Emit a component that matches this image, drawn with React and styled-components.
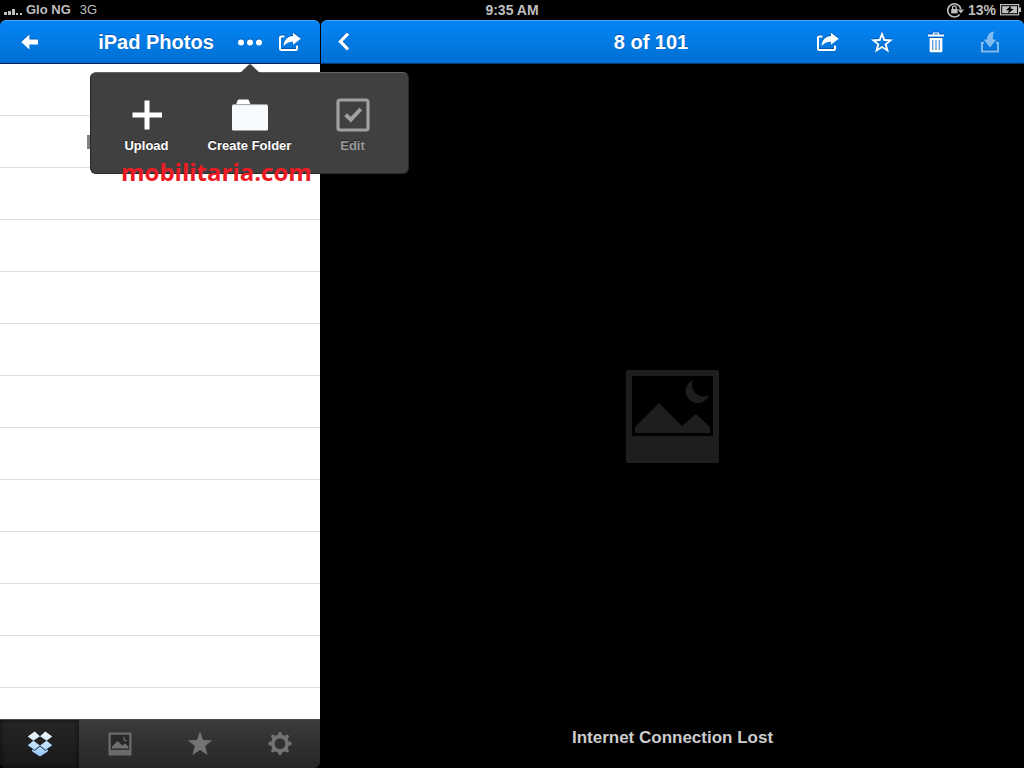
import React from 'react';
import styled, { createGlobalStyle, css } from 'styled-components';

const GlobalStyle = createGlobalStyle`
  * {
    box-sizing: border-box;
  }

  body {
    margin: 0;
    background: #000;
    font-family: "Liberation Sans", Helvetica, Arial, sans-serif;
  }

  button {
    padding: 0;
    border: 0;
    background: none;
    color: inherit;
    font: inherit;
    cursor: pointer;
  }

  svg {
    display: block;
  }
`;

const Screen = styled.div`
  display: flex;
  flex-direction: column;
  height: 100vh;
  overflow: hidden;
`;

const StatusBar = styled.div`
  display: grid;
  grid-template-columns: 1fr auto 1fr;
  align-items: center;
  height: 20px;
  padding: 0 3px;
  color: #bfbfbf;
  font-size: 14px;
  font-weight: bold;
  line-height: 20px;
`;

const StatusGroup = styled.div`
  display: flex;
  align-items: center;
  gap: 4px;
  justify-content: ${props => (props.$end ? 'flex-end' : 'flex-start')};
`;

const Carrier = styled.span`
  font-size: 13px;
`;

const Network = styled.span`
  margin-left: 5px;
  font-size: 13px;
  font-weight: normal;
`;

const Panes = styled.div`
  display: flex;
  flex: 1;
  gap: 1px;
  min-height: 0;
`;

const Sidebar = styled.aside`
  position: relative;
  display: flex;
  flex-direction: column;
  flex: 0 0 320px;
`;

const Viewer = styled.main`
  display: flex;
  flex-direction: column;
  flex: 1;
  min-width: 0;
`;

const NavBar = styled.header`
  display: flex;
  flex-shrink: 0;
  height: 44px;
  padding-right: ${props => (props.$wide ? '7px' : '10px')};
  border-top: 1px solid #4aa5f5;
  border-bottom: 1px solid ${props => (props.$wide ? '#04396f' : '#001c5c')};
  border-radius: 6px 6px 0 0;
  background: linear-gradient(180deg, #0585f5 0%, #006fd2 100%);
  color: #fff;
`;

const NavButton = styled.button`
  display: flex;
  align-items: center;
  justify-content: center;
  width: ${props => props.$width}px;
  filter: drop-shadow(0 -1px 0 rgba(0, 40, 110, 0.4));

  &:disabled {
    opacity: 0.5;
    cursor: default;
  }
`;

const NavTitle = styled.h1`
  flex: 1;
  margin: 0;
  padding-left: ${props => props.$inset}px;
  font-size: 20px;
  font-weight: bold;
  line-height: 42px;
  text-align: center;
  text-shadow: 0 -1px 0 rgba(0, 40, 110, 0.5);
  white-space: nowrap;
`;

const FileList = styled.ul`
  flex: 1;
  min-height: 0;
  margin: 0;
  padding: 0;
  overflow: hidden;
  background: #fff;
  list-style: none;
`;

const FileRow = styled.li`
  display: flex;
  align-items: center;
  height: 52px;
  border-bottom: 1px solid #e0e0e0;
`;

const RowMark = styled.span`
  width: 6px;
  height: 14px;
  margin-left: 87px;
  background: #808080;
`;

const TabBar = styled.nav`
  display: grid;
  flex-shrink: 0;
  grid-template-columns: repeat(4, 1fr);
  height: 49px;
  border-top: 1px solid #4a4a4a;
  border-radius: 0 0 6px 6px;
  background: linear-gradient(180deg, #3b3b3b 0%, #262626 100%);
`;

const Tab = styled.button`
  display: flex;
  align-items: center;
  justify-content: center;

  ${props =>
    props.$active &&
    css`
      margin-right: 1px;
      padding-left: 1px;
      border-radius: 0 0 0 6px;
      background: linear-gradient(180deg, #262626 0%, #181818 100%);
      box-shadow: inset 0 0 5px #0c0c0c;
    `}
`;

const Popover = styled.div`
  position: absolute;
  z-index: 2;
  top: 52px;
  left: 90px;
  width: 319px;
  padding: 25px 4px 17px;
  border: 1px solid #2a2a2a;
  border-top-color: #666;
  border-radius: 6px;
  background: #404040;
`;

const PopoverArrow = styled.svg`
  position: absolute;
  bottom: 100%;
  left: 149px;
`;

const PopoverActions = styled.div`
  display: grid;
  grid-template-columns: repeat(3, 1fr);
`;

const Action = styled.button`
  display: flex;
  flex-direction: column;
  align-items: center;
  gap: 4px;
  color: #fff;
  font-size: 13px;
  font-weight: bold;
  line-height: 20px;
  text-shadow: 0 -1px 0 #222;
  white-space: nowrap;

  &:disabled {
    color: #999;
    cursor: default;
  }
`;

const Watermark = styled.div`
  position: absolute;
  z-index: 3;
  top: 135px;
  left: 121px;
  color: #ed1c24;
  font-family: "Open Sans", "Noto Sans", sans-serif;
  font-size: 24px;
  font-weight: bold;
  line-height: 34px;
`;

const Stage = styled.section`
  display: grid;
  flex: 1;
  grid-template-rows: 1fr auto 1fr;
  justify-items: center;
`;

const Message = styled.p`
  grid-row: 3;
  align-self: end;
  margin: 0;
  padding-bottom: 20px;
  color: #ccc;
  font-size: 17px;
  font-weight: bold;
  line-height: 20px;
`;

const Placeholder = styled.svg`
  grid-row: 2;
`;

function SignalIcon() {
  return (
    <svg width="19" height="12" viewBox="0 0 19 12" fill="#bfbfbf">
      <rect x="1" y="8" width="3" height="3" />
      <rect x="5" y="7" width="3" height="4" />
      <rect x="9" y="5" width="3" height="6" />
      <rect x="13" y="9" width="2" height="2" />
      <rect x="17" y="9" width="2" height="2" />
    </svg>
  );
}

function RotationLockIcon() {
  return (
    <svg width="17" height="16" viewBox="0 0 17 16">
      <path d="M12.6 12.4A6.6 6.6 0 1 1 13.8 7" fill="none" stroke="#bfbfbf" strokeWidth="1.6" />
      <path d="M10.8 7.5H17l-3.1 4z" fill="#bfbfbf" />
      <rect x="4.2" y="7" width="6.4" height="4.4" fill="#bfbfbf" />
      <path d="M5.6 7V5.6a1.8 1.8 0 0 1 3.6 0V7" fill="none" stroke="#bfbfbf" strokeWidth="1.3" />
    </svg>
  );
}

function BatteryIcon() {
  return (
    <svg width="21" height="12" viewBox="0 0 21 12">
      <rect x="0.6" y="0.6" width="18" height="10.2" fill="none" stroke="#bfbfbf" strokeWidth="1.2" />
      <rect x="2.2" y="2.2" width="14.8" height="7" fill="#bfbfbf" />
      <path d="M19 3.6h2v4.4H19z" fill="#bfbfbf" />
      <path d="M11 1.6L6 6.2l3 .2L7.8 9.8l6-4.7-3.2-.3z" fill="#000" />
    </svg>
  );
}

function BackArrowIcon() {
  return (
    <svg width="18" height="16" viewBox="0 0 18 16" fill="#fff">
      <path d="M0.2 8L8.4 0.4V5.6H17V10.4H8.4V15.6z" />
    </svg>
  );
}

function ChevronIcon() {
  return (
    <svg width="14" height="20" viewBox="0 0 14 20" fill="none" stroke="#fff" strokeWidth="3.2">
      <path d="M11 1.6L3.4 9.4l7.6 8" />
    </svg>
  );
}

function MoreIcon() {
  return (
    <svg width="26" height="8" viewBox="0 0 26 8" fill="#fff">
      <circle cx="4" cy="4.6" r="3" />
      <circle cx="13" cy="4.6" r="3" />
      <circle cx="22" cy="4.6" r="3" />
    </svg>
  );
}

function ShareIcon() {
  return (
    <svg width="22" height="20" viewBox="0 0 22 20">
      <path
        d="M5.4 4.6H2.2Q1 4.6 1 5.8V16.8Q1 18 2.2 18H16.8Q18 18 18 16.8V13.4"
        fill="none"
        stroke="#fff"
        strokeWidth="2"
      />
      <path d="M14 0.8L21.8 6.8L14 12.8V9.8C10.4 9.6 7.8 10.6 4.6 14C4.8 8 8.6 4.2 14 4z" fill="#fff" />
    </svg>
  );
}

function StarOutlineIcon() {
  return (
    <svg width="22" height="22" viewBox="0 0 22 22">
      <path
        fillRule="evenodd"
        d="M11 0.4L14 8L22 8.4L15.8 13.4L18 21.4L11 17L4 21.4L6.2 13.4L0 8.4L8 8zM11 5.6L9.4 10L4.8 10.2L8.4 13L7.2 17.4L11 14.8L14.8 17.4L13.6 13L17.2 10.2L12.6 10z"
        fill="#fff"
      />
    </svg>
  );
}

function TrashIcon() {
  return (
    <svg width="16" height="22" viewBox="0 0 16 22">
      <path
        fillRule="evenodd"
        d="M5 1.6H11V3.4H16V5.4H0V3.4H5zM6.2 2.6V3.4H9.8V2.6z"
        fill="#fff"
      />
      <path d="M1.6 7H14.4V20Q14.4 21.2 13.2 21.2H2.8Q1.6 21.2 1.6 20z" fill="#fff" />
      <path d="M4.7 9v10M8 9v10M11.3 9v10" stroke="#5a96d8" strokeWidth="1.3" />
    </svg>
  );
}

function DownloadIcon() {
  return (
    <svg width="20" height="22" viewBox="0 0 20 22">
      <path d="M4 11.8H2V20.4H18V11.8H16" fill="none" stroke="#fff" strokeWidth="2" />
      <path d="M14.6 0.2C12.8 3 12.7 5.4 13 8.4H16.4L10 16.4L3.6 8.4H7C7 4.2 9.4 1 14.6 0.2z" fill="#fff" />
    </svg>
  );
}

function PlusIcon() {
  return (
    <svg width="34" height="34" viewBox="0 0 34 34" fill="#fff">
      <path d="M14.5 2.5h5v12H32v5H19.5V31.5h-5v-12H2.500v-5h12z" />
    </svg>
  );
}

function FolderIcon() {
  return (
    <svg width="38" height="34" viewBox="0 0 38 34">
      <path d="M5 6.4L6.6 2.6Q7 1.6 8 1.6H16.6Q17.6 1.6 18 2.4L19.6 6.4z" fill="#fff" />
      <rect x="1" y="7" width="36" height="25.6" rx="1.4" fill="#f8fbfd" />
      <path d="M1.6 6.6h34.8" stroke="#aaa" strokeWidth="1" />
    </svg>
  );
}

function CheckBoxIcon() {
  return (
    <svg width="34" height="34" viewBox="0 0 34 34" fill="none" stroke="#a0a0a0">
      <rect x="2" y="2" width="30" height="30" rx="2" strokeWidth="3.2" />
      <path d="M9.6 16.6L14.8 21.6L24.8 11" strokeWidth="4" />
    </svg>
  );
}

function DropboxIcon() {
  return (
    <svg width="26" height="26" viewBox="0 0 26 26">
      <defs>
        <linearGradient id="box" x1="0" y1="0" x2="0" y2="26" gradientUnits="userSpaceOnUse">
          <stop offset="0" stopColor="#f6faff" />
          <stop offset="1" stopColor="#8cc8fb" />
        </linearGradient>
      </defs>
      <g fill="url(#box)">
        <path d="M7.6 0.6L13 5.2L6.4 9.8L0.8 5.4z" />
        <path d="M18.400 0.600L25.200 5.400L19.600 9.800L13 5.200z" />
        <path d="M6.4 9.8L13 14.4L7.6 19L0.8 14.2z" />
        <path d="M19.6 9.8L25.2 14.2L18.400 19L13 14.400z" />
        <path d="M13 15.6L18.200 19.800L20.800 18.200V20.400L13 25.600L5.200 20.400V18.200L7.800 19.800z" />
      </g>
    </svg>
  );
}

function PhotoIcon() {
  return (
    <svg width="24" height="24" viewBox="0 0 24 24">
      <path d="M0.5 0.5h23v23H0.5z" fill="#6a6a6a" />
      <path d="M2.8 2.8h18.4v15H2.8z" fill="#272727" />
      <path d="M4 16.6v-2L9.6 9l4.6 4.6L17 11.6l3.4 3v2z" fill="#707070" />
      <path d="M17.2 4.2a2.6 2.6 0 1 0 3 3.6a2.2 2.2 0 0 1-3-3.6z" fill="#707070" />
    </svg>
  );
}

function StarIcon() {
  return (
    <svg width="26" height="26" viewBox="0 0 26 26">
      <path
        d="M13 0.4L16.2 8.9L25.2 9.3L18.2 15L20.6 24L13 19L5.4 24L7.8 15L0.8 9.3L9.8 8.9z"
        fill="#737373"
      />
    </svg>
  );
}

function GearIcon() {
  const teeth = [0, 45, 90, 135, 180, 225, 270, 315];

  return (
    <svg width="26" height="26" viewBox="0 0 26 26">
      <circle cx="13" cy="12.6" r="7.2" fill="none" stroke="#737373" strokeWidth="3.6" />
      {teeth.map(angle => (
        <path
          key={angle}
          d="M10.4 4.4L12 0.9h2L15.6 4.4z"
          fill="#737373"
          transform={`rotate(${angle} 13 12.6)`}
        />
      ))}
    </svg>
  );
}

const rows = Array.from({ length: 13 }, (_, index) => index);

const tabs = [
  { label: 'Files', icon: <DropboxIcon />, active: true },
  { label: 'Photos', icon: <PhotoIcon /> },
  { label: 'Favorites', icon: <StarIcon /> },
  { label: 'Settings', icon: <GearIcon /> },
];

function ActionsPopover() {
  return (
    <Popover>
      <PopoverArrow width="20" height="9" viewBox="0 0 20 9">
        <path d="M0 9L9 0.6Q10 -0.2 11 0.6L20 9z" fill="#404040" />
      </PopoverArrow>
      <PopoverActions>
        <Action>
          <PlusIcon />
          Upload
        </Action>
        <Action>
          <FolderIcon />
          Create Folder
        </Action>
        <Action disabled>
          <CheckBoxIcon />
          Edit
        </Action>
      </PopoverActions>
    </Popover>
  );
}

export default function App() {
  return (
    <Screen>
      <GlobalStyle />
      <StatusBar>
        <StatusGroup>
          <SignalIcon />
          <Carrier>Glo NG</Carrier>
          <Network>3G</Network>
        </StatusGroup>
        <span>9:35 AM</span>
        <StatusGroup $end>
          <RotationLockIcon />
          <span>13%</span>
          <BatteryIcon />
        </StatusGroup>
      </StatusBar>
      <Panes>
        <Sidebar>
          <NavBar>
            <NavButton $width={60} aria-label="Back">
              <BackArrowIcon />
            </NavButton>
            <NavTitle $inset={22}>iPad Photos</NavTitle>
            <NavButton $width={40} aria-label="More">
              <MoreIcon />
            </NavButton>
            <NavButton $width={40} aria-label="Share folder">
              <ShareIcon />
            </NavButton>
          </NavBar>
          <FileList>
            {rows.map(row => (
              <FileRow key={row}>{row === 1 && <RowMark />}</FileRow>
            ))}
          </FileList>
          <TabBar>
            {tabs.map(tab => (
              <Tab key={tab.label} $active={tab.active} aria-label={tab.label}>
                {tab.icon}
              </Tab>
            ))}
          </TabBar>
          <ActionsPopover />
          <Watermark>mobilitaria.com</Watermark>
        </Sidebar>
        <Viewer>
          <NavBar $wide>
            <NavButton $width={46} aria-label="Previous">
              <ChevronIcon />
            </NavButton>
            <NavTitle $inset={134}>8 of 101</NavTitle>
            <NavButton $width={54} aria-label="Share">
              <ShareIcon />
            </NavButton>
            <NavButton $width={54} aria-label="Favorite">
              <StarOutlineIcon />
            </NavButton>
            <NavButton $width={54} aria-label="Delete">
              <TrashIcon />
            </NavButton>
            <NavButton $width={54} aria-label="Download" disabled>
              <DownloadIcon />
            </NavButton>
          </NavBar>
          <Stage>
            <Placeholder width="94" height="94" viewBox="0 0 94 94">
              <path
                fillRule="evenodd"
                d="M2 1H91Q93 1 93 3V92Q93 94 91 94H2Q0 94 0 92V3Q0 1 2 1zM6 7V67H87V7z"
                fill="#1e1e1e"
              />
              <path d="M9 64V58L33 34L56 57L70 45L84 58V64z" fill="#1e1e1e" />
              <path d="M67 11A12 12 0 1 0 83 26A11.5 11.5 0 0 1 67 11z" fill="#1e1e1e" />
            </Placeholder>
            <Message>Internet Connection Lost</Message>
          </Stage>
        </Viewer>
      </Panes>
    </Screen>
  );
}
